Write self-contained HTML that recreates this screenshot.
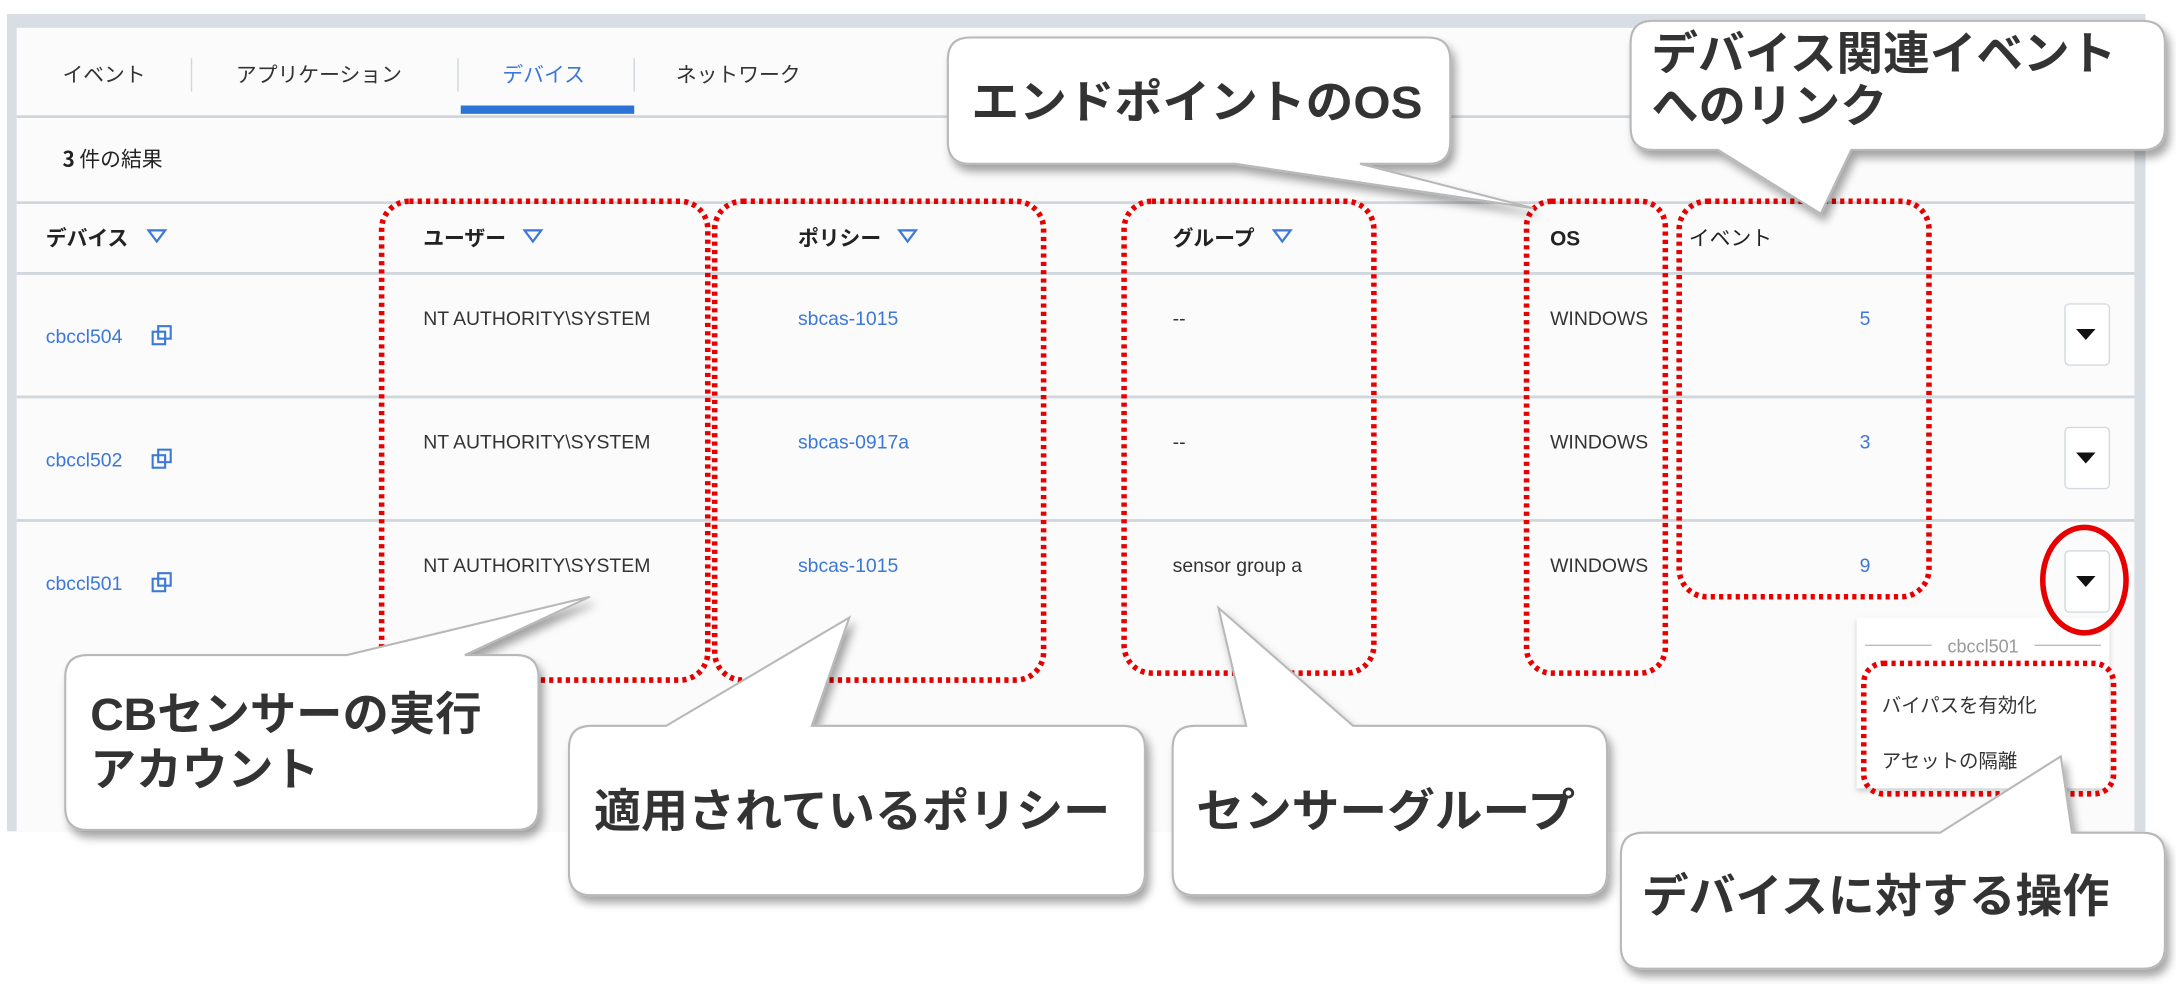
<!DOCTYPE html>
<html><head><meta charset="utf-8"><style>
html,body{margin:0;padding:0;background:#fff;width:2176px;height:984px;overflow:hidden}
svg{display:block}
text{font-family:"Liberation Sans","Noto Sans CJK JP",sans-serif}
.cj{font-family:"Noto Sans CJK JP","Liberation Sans",sans-serif}
</style></head><body>
<svg width="2176" height="984" viewBox="0 0 1568 709" xmlns="http://www.w3.org/2000/svg">
<defs>
<filter id="sh" x="-10%" y="-10%" width="125%" height="130%"><feDropShadow dx="3" dy="5" stdDeviation="3" flood-color="#000" flood-opacity="0.35"/></filter>
<filter id="sh2" x="-10%" y="-10%" width="125%" height="130%"><feDropShadow dx="0" dy="2" stdDeviation="2" flood-color="#000" flood-opacity="0.2"/></filter>
</defs>
<!-- frame -->
<rect x="5" y="10" width="1541" height="589" fill="#d8dee4"/>
<rect x="12" y="20" width="1526" height="579" fill="#fbfbfb"/>
<!-- tabs -->
<g class="cj" font-size="15" fill="#333">
<text x="45" y="59">イベント</text>
<text x="170" y="59">アプリケーション</text>
<text x="362" y="59" fill="#3b78d8">デバイス</text>
<text x="487" y="59">ネットワーク</text>
</g>
<g stroke="#cfd6dc" stroke-width="1"><line x1="138" y1="42" x2="138" y2="66"/><line x1="330" y1="42" x2="330" y2="66"/><line x1="457" y1="42" x2="457" y2="66"/></g>
<rect x="332" y="76" width="125" height="6" fill="#2b74d6"/>
<g fill="#cfd6dc"><rect x="12" y="83" width="1526" height="2"/><rect x="12" y="145" width="1526" height="2"/><rect x="12" y="196" width="1526" height="2"/><rect x="12" y="285" width="1526" height="2"/><rect x="12" y="374" width="1526" height="2"/></g>
<text class="cj" x="45" y="120" font-size="15" fill="#222"><tspan font-weight="bold">3</tspan> 件の結果</text>
<!-- headers -->
<g class="cj" font-size="15" font-weight="bold" fill="#222">
<text x="33" y="177">デバイス</text><text x="305" y="177">ユーザー</text><text x="575" y="177">ポリシー</text><text x="845" y="177">グループ</text><text x="1117" y="177">OS</text><text x="1217" y="177" font-weight="normal">イベント</text>
</g>
<g fill="none" stroke="#3b78d8" stroke-width="1.6"><path d="M107,166 h12 l-6,8z"/><path d="M378,166 h12 l-6,8z"/><path d="M648,166 h12 l-6,8z"/><path d="M918,166 h12 l-6,8z"/></g>
<!-- rows -->
<g font-size="14" fill="#333">
<text x="33" y="247" fill="#3b78d8">cbccl504</text><text x="33" y="336" fill="#3b78d8">cbccl502</text><text x="33" y="425" fill="#3b78d8">cbccl501</text>
<text x="305" y="234">NT AUTHORITY\SYSTEM</text><text x="305" y="323">NT AUTHORITY\SYSTEM</text><text x="305" y="412">NT AUTHORITY\SYSTEM</text>
<text x="575" y="234" fill="#3b78d8">sbcas-1015</text><text x="575" y="323" fill="#3b78d8">sbcas-0917a</text><text x="575" y="412" fill="#3b78d8">sbcas-1015</text>
<text x="845" y="234">--</text><text x="845" y="323">--</text><text x="845" y="412">sensor group a</text>
<text x="1117" y="234">WINDOWS</text><text x="1117" y="323">WINDOWS</text><text x="1117" y="412">WINDOWS</text>
<text x="1340" y="234" fill="#3b78d8">5</text><text x="1340" y="323" fill="#3b78d8">3</text><text x="1340" y="412" fill="#3b78d8">9</text>
</g>
<g fill="none" stroke="#3b78d8" stroke-width="1.5">
<rect x="114" y="235" width="9" height="9"/><rect x="110" y="239" width="9" height="9"/>
<rect x="114" y="324" width="9" height="9"/><rect x="110" y="328" width="9" height="9"/>
<rect x="114" y="413" width="9" height="9"/><rect x="110" y="417" width="9" height="9"/>
</g>
<g>
<rect x="1488" y="219" width="32" height="44" rx="3" fill="#fff" stroke="#d3d9df"/><path d="M1496,237 h14 l-7,8z" fill="#111"/>
<rect x="1488" y="308" width="32" height="44" rx="3" fill="#fff" stroke="#d3d9df"/><path d="M1496,326 h14 l-7,8z" fill="#111"/>
<rect x="1488" y="397" width="32" height="44" rx="3" fill="#fff" stroke="#d3d9df"/><path d="M1496,415 h14 l-7,8z" fill="#111"/>
</g>
<!-- menu -->
<rect x="1338" y="445" width="182" height="123" fill="#fff" filter="url(#sh2)"/>
<g stroke="#bbb"><line x1="1344" y1="465" x2="1392" y2="465"/><line x1="1466" y1="465" x2="1514" y2="465"/></g>
<text x="1429" y="470" font-size="13" fill="#999" text-anchor="middle">cbccl501</text>
<text class="cj" x="1356" y="513" font-size="14" fill="#333">バイパスを有効化</text>
<text class="cj" x="1356" y="553" font-size="14" fill="#333">アセットの隔離</text>
<!-- red circle -->
<ellipse cx="1502" cy="418" rx="30" ry="38" fill="none" stroke="#e60000" stroke-width="4"/>
<!-- dotted boxes -->
<g fill="none" stroke="#e60000" stroke-width="4" stroke-dasharray="3,3">
<rect x="275" y="145" width="235" height="345" rx="20"/>
<rect x="515" y="145" width="237" height="345" rx="20"/>
<rect x="810" y="145" width="180" height="340" rx="20"/>
<rect x="1100" y="145" width="100" height="340" rx="18"/>
<rect x="1210" y="145" width="180" height="285" rx="20"/>
<rect x="1343" y="478" width="180" height="94" rx="14"/>
</g>
<!-- callouts -->
<g fill="#fff" stroke="#b8b8b8" stroke-width="1.5" filter="url(#sh)">
<path d="M699,27 H1029 Q1045,27 1045,43 V102 Q1045,118 1029,118 H980 L1105,150 L890,118 H699 Q683,118 683,102 V43 Q683,27 699,27 Z"/>
<path d="M1191,15 H1544 Q1560,15 1560,31 V92 Q1560,108 1544,108 H1334 L1312,154 L1238,108 H1191 Q1175,108 1175,92 V31 Q1175,15 1191,15 Z"/>
<path d="M63,472 H250 L425,430 L335,472 H372 Q388,472 388,488 V582 Q388,598 372,598 H63 Q47,598 47,582 V488 Q47,472 63,472 Z"/>
<path d="M426,523 H480 L612,445 L585,523 H809 Q825,523 825,539 V629 Q825,645 809,645 H426 Q410,645 410,629 V539 Q410,523 426,523 Z"/>
<path d="M861,523 H898 L878,438 L975,523 H1142 Q1158,523 1158,539 V629 Q1158,645 1142,645 H861 Q845,645 845,629 V539 Q845,523 861,523 Z"/>
<path d="M1184,600 H1398 L1485,545 L1493,600 H1544 Q1560,600 1560,616 V682 Q1560,698 1544,698 H1184 Q1168,698 1168,682 V616 Q1168,600 1184,600 Z"/>
</g>
<g class="cj" font-weight="bold" font-size="33" fill="#333">
<text x="700" y="85" textLength="325" lengthAdjust="spacingAndGlyphs">エンドポイントのOS</text>
<text x="1190" y="50" textLength="335" lengthAdjust="spacingAndGlyphs">デバイス関連イベント</text>
<text x="1190" y="88" textLength="170" lengthAdjust="spacingAndGlyphs">へのリンク</text>
<text x="65" y="526" textLength="282" lengthAdjust="spacingAndGlyphs">CBセンサーの実行</text>
<text x="65" y="566" textLength="165" lengthAdjust="spacingAndGlyphs">アカウント</text>
<text x="428" y="596" textLength="372" lengthAdjust="spacingAndGlyphs">適用されているポリシー</text>
<text x="862" y="596" textLength="273" lengthAdjust="spacingAndGlyphs">センサーグループ</text>
<text x="1183" y="657" textLength="337" lengthAdjust="spacingAndGlyphs">デバイスに対する操作</text>
</g>
</svg>
</body></html>
